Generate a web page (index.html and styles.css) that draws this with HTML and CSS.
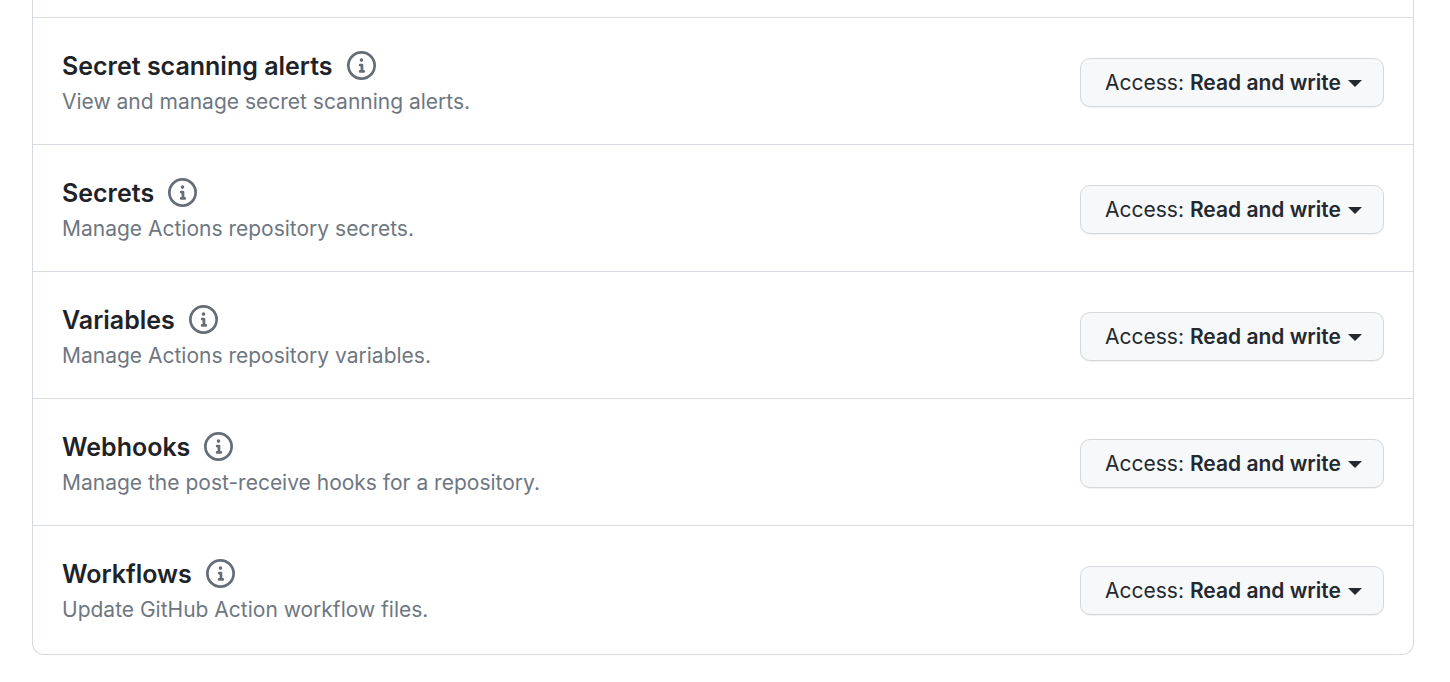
FILE: index.html
```html
<!DOCTYPE html>
<html lang="en">
<head>
<meta charset="utf-8">
<title>Repository permissions</title>
<link rel="stylesheet" href="styles.css">
</head>
<body>
<svg class="defs" aria-hidden="true">
<symbol id="info" viewBox="0 0 16 16"><path d="M0 8a8 8 0 1 1 16 0A8 8 0 0 1 0 8Zm8-6.500a6.500 6.500 0 1 0 0 13 6.500 6.500 0 0 0 0-13ZM6.500 7.750A.75.75 0 0 1 7.250 7h1a.75.75 0 0 1 .75.75v2.750h.25a.75.75 0 0 1 0 1.500h-2a.75.75 0 0 1 0-1.500h.25v-2h-.25a.75.75 0 0 1-.75-.75ZM8 6a1 1 0 1 1 0-2 1 1 0 0 1 0 2Z"/></symbol>
</svg>
<main class="permissions">
<ul class="list">
<li class="row">
<div class="details"><div class="heading"><h2 class="title">Secret scanning alerts</h2><svg class="icon" role="img" aria-label="Information"><use href="#info"/></svg></div><p class="description">View and manage secret scanning alerts.</p></div>
<button class="access" type="button">Access: <strong class="level">Read and write</strong><span class="caret"></span></button>
</li>
<li class="row">
<div class="details"><div class="heading"><h2 class="title">Secrets</h2><svg class="icon" role="img" aria-label="Information"><use href="#info"/></svg></div><p class="description">Manage Actions repository secrets.</p></div>
<button class="access" type="button">Access: <strong class="level">Read and write</strong><span class="caret"></span></button>
</li>
<li class="row">
<div class="details"><div class="heading"><h2 class="title">Variables</h2><svg class="icon" role="img" aria-label="Information"><use href="#info"/></svg></div><p class="description">Manage Actions repository variables.</p></div>
<button class="access" type="button">Access: <strong class="level">Read and write</strong><span class="caret"></span></button>
</li>
<li class="row">
<div class="details"><div class="heading"><h2 class="title">Webhooks</h2><svg class="icon" role="img" aria-label="Information"><use href="#info"/></svg></div><p class="description">Manage the post-receive hooks for a repository.</p></div>
<button class="access" type="button">Access: <strong class="level">Read and write</strong><span class="caret"></span></button>
</li>
<li class="row">
<div class="details"><div class="heading"><h2 class="title">Workflows</h2><svg class="icon" role="img" aria-label="Information"><use href="#info"/></svg></div><p class="description">Update GitHub Action workflow files.</p></div>
<button class="access" type="button">Access: <strong class="level">Read and write</strong><span class="caret"></span></button>
</li>
</ul>
</main>
</body>
</html>
```
FILE: styles.css
```css
* { box-sizing: border-box; }
body { margin: 0; background: #fff; color: #1f2328; font-family: Inter, "Liberation Sans", sans-serif; }
.defs { display: none; }
.permissions { padding: 0 36px 27px 32px; }
.list { margin: 0; padding: 17px 0 2px; list-style: none; border: 1px solid #d5d9e0; border-top: 0; border-radius: 0 0 12px 12px; }
.row { display: flex; align-items: center; justify-content: space-between; gap: 24px; padding: 30px 29px 27px; border-top: 1px solid #d8dce2; }
.heading { display: flex; align-items: center; gap: 14px; }
.title { margin: 0; font-size: 25px; line-height: 36px; font-weight: 600; }
.icon { width: 29px; height: 29px; margin-bottom: 1px; fill: #656d76; }
.description { margin: 0; padding-top: 3px; color: #6e7781; font-size: 21px; line-height: 30px; }
.access { display: flex; align-items: center; height: 49px; padding: 1px 21px 0 24px; border: 1px solid #d5d8da; border-radius: 10px; background: #f6f8fa; color: #24292f; font: 400 21px/32px Inter, "Liberation Sans", sans-serif; white-space: pre; box-shadow: 0 1px 1px rgba(31, 35, 40, 0.06); }
.level { font-weight: 600; }
.caret { margin-left: 7px; border: 7px solid transparent; border-top-color: #24292f; border-bottom: 0; }
```
